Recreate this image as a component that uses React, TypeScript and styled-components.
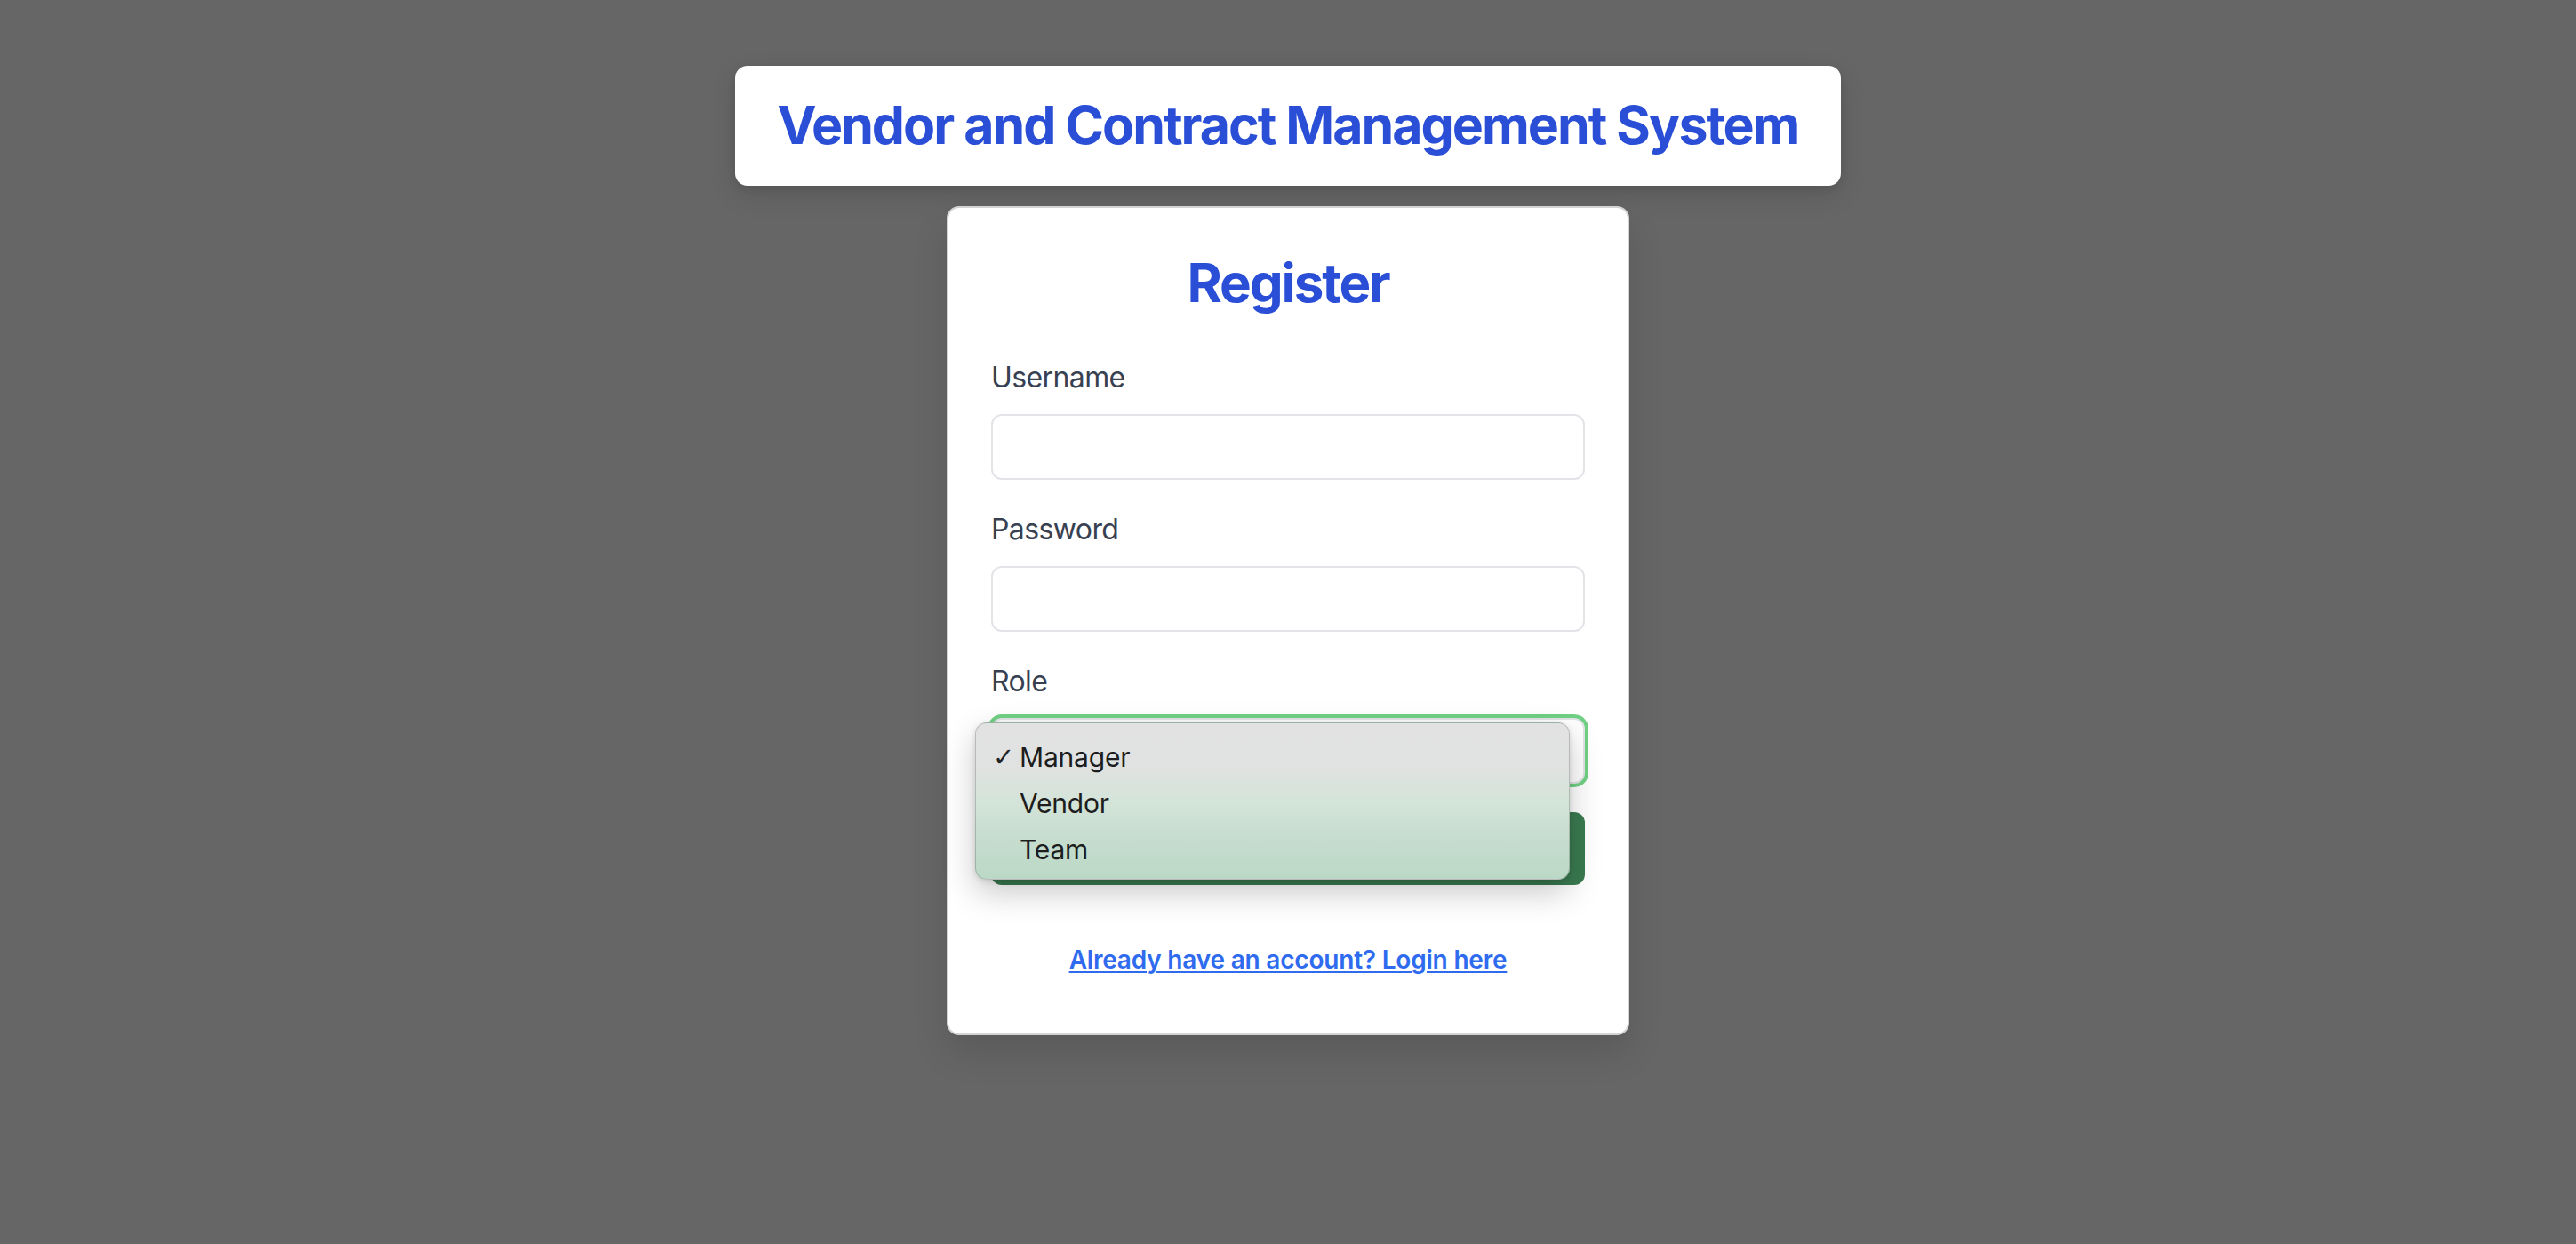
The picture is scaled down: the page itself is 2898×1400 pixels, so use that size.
import React from "react";
import styled, { createGlobalStyle } from "styled-components";

const Global = createGlobalStyle`
  html, body { margin: 0; padding: 0; }
  body {
    background: #666666;
    font-family: Inter, "Noto Sans", "DejaVu Sans", sans-serif;
    min-height: 1400px;
  }
  * { box-sizing: border-box; }
`;

const Page = styled.div`
  display: flex;
  flex-direction: column;
  align-items: center;
  padding-top: 74px;
  gap: 23px;
  min-height: 1400px;
`;

const TitleCard = styled.header`
  background: #ffffff;
  border-radius: 14px;
  padding: 31px 48px 32px;
  box-shadow: 0 10px 30px rgba(0, 0, 0, 0.12), 0 4px 10px rgba(0, 0, 0, 0.08);
`;

const AppTitle = styled.h1`
  margin: 0;
  font-size: 59px;
  line-height: 72px;
  font-weight: 700;
  color: #2a4fd6;
  letter-spacing: -2px;
`;

const Card = styled.main`
  width: 768px;
  background: #ffffff;
  border: 2px solid #d4d4d4;
  border-radius: 14px;
  padding: 48px 48px 62px;
  box-shadow: 0 20px 40px rgba(0, 0, 0, 0.12);
  display: flex;
  flex-direction: column;
`;

const Heading = styled.h2`
  margin: 0 0 47px;
  text-align: center;
  font-size: 60px;
  line-height: 72px;
  font-weight: 700;
  color: #2a4fd6;
  letter-spacing: -2.1px;
`;

const Field = styled.div`
  display: flex;
  flex-direction: column;
  margin-bottom: 32px;
  position: relative;
`;

const Label = styled.label`
  font-size: 32px;
  line-height: 48px;
  color: #374151;
  margin-bottom: 17px;
  letter-spacing: -0.6px;
`;

const Input = styled.input`
  height: 74px;
  width: 100%;
  border: 2px solid #e2e4e8;
  border-radius: 12px;
  padding: 0 24px;
  font-size: 30px;
  font-family: inherit;
  background: #fff;
  outline: none;
`;

const SelectBox = styled.div`
  height: 74px;
  width: 100%;
  border: 2px solid #e2e4e8;
  border-radius: 12px;
  padding: 0 24px;
  background: #fff;
  box-shadow: 0 0 0 4px #70d184;
`;

const Popup = styled.ul`
  position: absolute;
  left: -18px;
  top: 70px;
  width: 669px;
  height: 177px;
  margin: 0;
  padding: 12px 0 0;
  list-style: none;
  border-radius: 13px;
  border: 1px solid rgba(0, 0, 0, 0.18);
  background: linear-gradient(
    180deg,
    #e2e2e2 0%,
    #e0e2e1 28%,
    #d4e4d9 50%,
    #c6ddce 75%,
    #bbd8c6 100%
  );
  box-shadow: 0 14px 36px rgba(0, 0, 0, 0.22), 0 2px 6px rgba(0, 0, 0, 0.12);
  z-index: 5;
`;

const Option = styled.li`
  display: flex;
  align-items: center;
  height: 52px;
  font-size: 30px;
  color: #1d1d1d;
  letter-spacing: -0.2px;
`;

const Check = styled.span`
  width: 49px;
  padding-left: 19px;
  font-family: "DejaVu Sans", sans-serif;
  font-size: 29px;
  font-weight: 700;
  color: #222;
`;

const Button = styled.button`
  height: 82px;
  width: 100%;
  border: none;
  border-radius: 12px;
  background: #3a7b51;
  color: #fff;
  font-family: inherit;
  font-size: 32px;
  font-weight: 600;
  margin-bottom: 63px;
`;

const LinkRow = styled.p`
  margin: 0;
  text-align: center;
  font-size: 28px;
  line-height: 42px;
`;

const Link = styled.a`
  color: #2f6bef;
  font-weight: 600;
  text-decoration: underline;
  text-underline-offset: 3px;
  text-decoration-thickness: 2px;
  letter-spacing: -0.2px;
`;

export default function App() {
  return (
    <>
      <Global />
      <Page>
        <TitleCard>
          <AppTitle>Vendor and Contract Management System</AppTitle>
        </TitleCard>
        <Card>
          <Heading>Register</Heading>
          <Field>
            <Label>Username</Label>
            <Input type="text" />
          </Field>
          <Field>
            <Label>Password</Label>
            <Input type="password" />
          </Field>
          <Field>
            <Label>Role</Label>
            <SelectBox />
            <Popup>
              <Option>
                <Check>✓</Check>Manager
              </Option>
              <Option>
                <Check />Vendor
              </Option>
              <Option>
                <Check />Team
              </Option>
            </Popup>
          </Field>
          <Button />
          <LinkRow>
            <Link href="#">Already have an account? Login here</Link>
          </LinkRow>
        </Card>
      </Page>
    </>
  );
}
